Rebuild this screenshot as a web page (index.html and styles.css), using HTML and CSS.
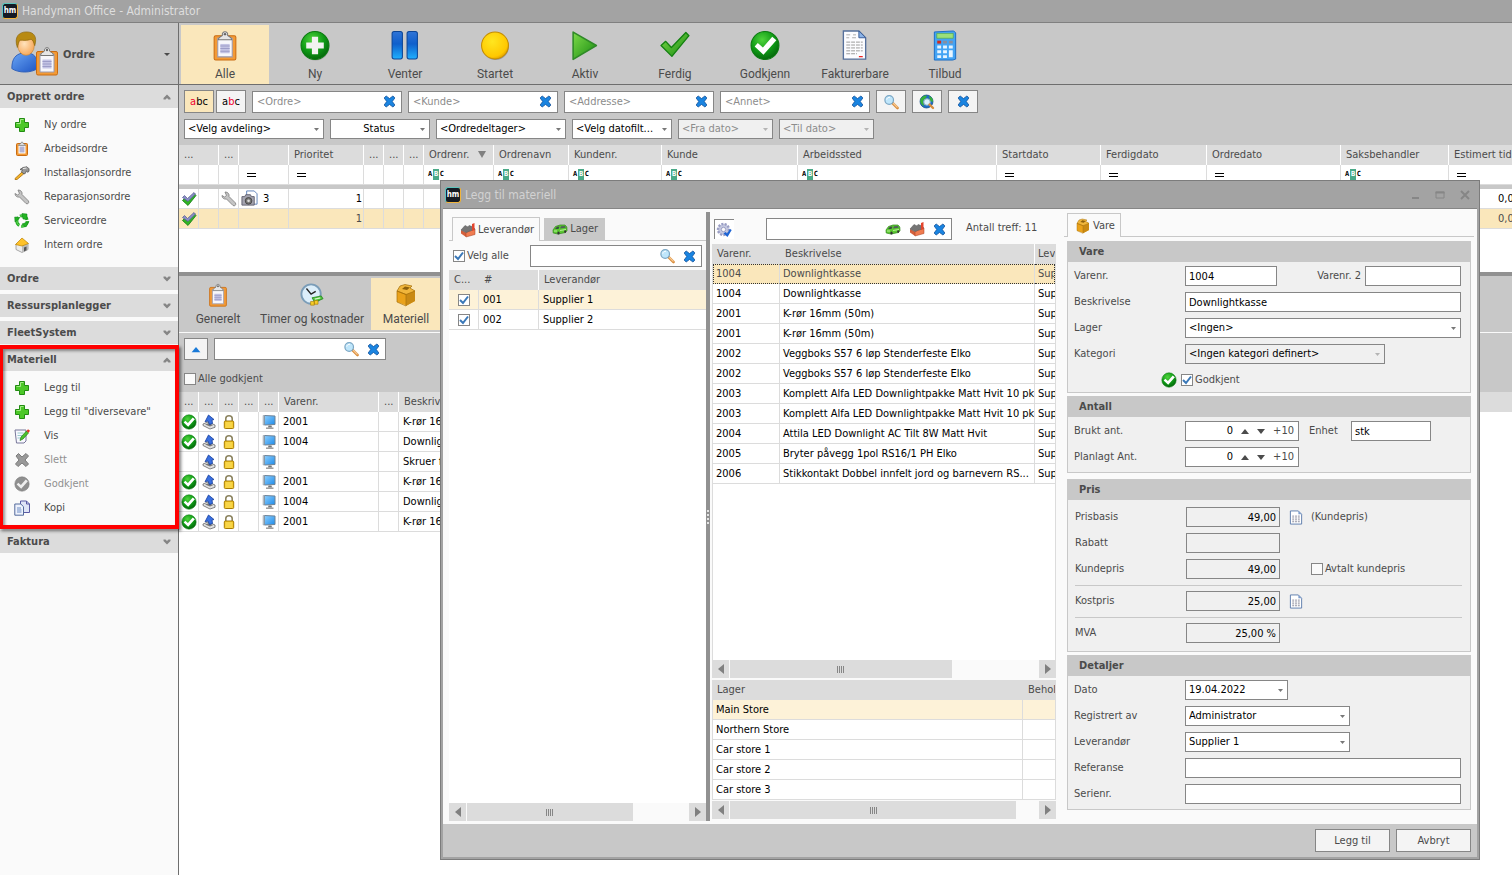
FILE: index.html
```html
<!DOCTYPE html>
<html lang="no">
<head>
    <meta charset="utf-8">
    <meta name="viewport" content="width=device-width, initial-scale=1.0">
    <title>Handyman Office - Administrator</title>
    <link rel="stylesheet" href="styles.css">
</head>
<body>
    <!-- Icon sprite -->
    <svg class="sprite" width="0" height="0" aria-hidden="true">
        <defs>
            <linearGradient id="g-green" x1="0" y1="0" x2="1" y2="1"><stop offset="0" stop-color="#7edb4a"/><stop offset="1" stop-color="#178a10"/></linearGradient>
            <radialGradient id="g-ball" cx=".4" cy=".3" r=".7"><stop offset="0" stop-color="#4fd43c"/><stop offset=".6" stop-color="#0f9a16"/><stop offset="1" stop-color="#056a0c"/></radialGradient>
            <linearGradient id="g-blue" x1="0" y1="0" x2="0" y2="1"><stop offset="0" stop-color="#2f74d6"/><stop offset=".45" stop-color="#0f5fcc"/><stop offset="1" stop-color="#1fb0ff"/></linearGradient>
            <radialGradient id="g-yellow" cx=".4" cy=".35" r=".7"><stop offset="0" stop-color="#ffe620"/><stop offset=".8" stop-color="#ffc800"/><stop offset="1" stop-color="#dc9a00"/></radialGradient>
            <radialGradient id="g-skin" cx=".4" cy=".4" r=".7"><stop offset="0" stop-color="#ffe3bd"/><stop offset="1" stop-color="#f5a250"/></radialGradient>
            <linearGradient id="g-shirt" x1="0" y1="0" x2="1" y2="1"><stop offset="0" stop-color="#6aa6f5"/><stop offset="1" stop-color="#1e55c4"/></linearGradient>
            <linearGradient id="g-screen" x1="0" y1="0" x2="1" y2="1"><stop offset="0" stop-color="#8fd0ff"/><stop offset="1" stop-color="#1c8ae8"/></linearGradient>
        </defs>
        <symbol id="i-clipboard" viewBox="0 0 24 30">
            <rect x="1.500" y="5.500" width="21" height="23.500" rx="1.500" fill="#f39a35" stroke="#c96c12"/>
            <path d="M5 8h14v18H5z" fill="#f7f7fb" stroke="#9a9ab0"/>
            <path d="M7.500 13.500h9v9h-9z" fill="#c3c3e4"/>
            <path d="M7.500 15.500h9M7.500 18h9M7.500 20.500h9" stroke="#9d9dc8"/>
            <path d="M5.500 9.500c0-3 3-3 4-4.500a2.600 2.600 0 1 1 5 0c1 1.500 4 1.500 4 4.500z" fill="#e6e6e6" stroke="#777"/>
            <circle cx="12" cy="4" r="1.200" fill="#666"/>
        </symbol>
        <symbol id="i-clip16" viewBox="0 0 16 16">
            <rect x="2.500" y="2.500" width="11" height="12" rx="1" fill="#f39a35" stroke="#c96c12"/>
            <path d="M4.500 3.500h7v9h-7z" fill="#fff"/>
            <path d="M5.500 5.500h5v6h-5z" fill="#b4b4d4"/>
            <path d="M4.500 4.500c0-1.500 2-1 2.500-2.500s1.500-1.500 2 0 2.500 1 2.500 2.500z" fill="#ddd" stroke="#777" stroke-width=".7"/>
        </symbol>
        <symbol id="i-person" viewBox="0 0 48 48">
            <path d="M2 41c0-11 4-15 11-17h8c7 2 9 6 9 17-7 5-21 5-28 0z" fill="url(#g-shirt)" stroke="#2a5cb8"/>
            <ellipse cx="17.500" cy="16" rx="9" ry="10.500" fill="url(#g-skin)" stroke="#c8842e" stroke-width=".7"/>
            <path d="M8 18C4 6 10 1 18 1s12 5 9 15c-1-4-2-6-4-7-5 2-9 1-12 1-2 2-2 5-3 8z" fill="#b88a12" stroke="#8a6208" stroke-width=".7"/>
        </symbol>
        <symbol id="i-addball" viewBox="0 0 30 30">
            <circle cx="15.500" cy="16" r="13.500" fill="#999" opacity=".7"/>
            <circle cx="15" cy="15" r="13.500" fill="url(#g-ball)" stroke="#0b7a10"/>
            <path d="M12 6.500h6V12h5.500v6H18v5.500h-6V18H6.500v-6H12z" fill="#f2f2f2"/>
        </symbol>
        <symbol id="i-pause" viewBox="0 0 30 30">
            <rect x="2.500" y="1.500" width="10" height="26.500" rx="2" fill="url(#g-blue)" stroke="#0c4596"/>
            <rect x="17" y="1.500" width="10" height="26.500" rx="2" fill="url(#g-blue)" stroke="#0c4596"/>
        </symbol>
        <symbol id="i-yellow" viewBox="0 0 30 30"><circle cx="15.500" cy="16" r="13" fill="#777" opacity=".6"/><circle cx="15" cy="15" r="13" fill="url(#g-yellow)" stroke="#c48c00"/></symbol>
        <symbol id="i-play" viewBox="0 0 30 30"><path d="M3.500 2L26 15 3.500 28.500z" fill="url(#g-green)" stroke="#2f8a28" stroke-width="1.500" stroke-linejoin="round"/></symbol>
        <symbol id="i-tick" viewBox="0 0 30 30"><path d="M1.500 15l4.500-4 5.500 6L25.500 2.500l3 3L12 25.500z" fill="url(#g-green)" stroke="#138010" stroke-width="1.300" stroke-linejoin="round"/></symbol>
        <symbol id="i-okball" viewBox="0 0 30 30">
            <circle cx="15" cy="15" r="13.500" fill="url(#g-ball)" stroke="#0b7a10"/>
            <path d="M5 16l3-3.500 5 4.500 9-10.500 4 3.500-12.500 14z" fill="#fff"/>
        </symbol>
        <symbol id="i-okgray" viewBox="0 0 30 30"><circle cx="15" cy="15" r="13.500" fill="#8f8f8f" stroke="#777"/><path d="M5 16l3-3.500 5 4.500 9-10.500 4 3.500-12.500 14z" fill="#eee"/></symbol>
        <symbol id="i-invoice" viewBox="0 0 26 32">
            <path d="M1 1h16l7 7v22H1z" fill="#fcfcff" stroke="#56709c" stroke-width="1.400"/>
            <path d="M17 1l7 7h-7z" fill="#8cb4e8" stroke="#3c5e98"/>
            <path d="M4 5h4M11 5h3M4 8h3M10 8h4" stroke="#aaa"/>
            <path d="M4 12.500h17M4 15.500h17M4 18.500h17M4 21.500h17M4 24.500h11" stroke="#999" stroke-dasharray="4 1"/>
            <path d="M17 27.500h4" stroke="#e22" stroke-width="1.300"/>
        </symbol>
        <symbol id="i-calc" viewBox="0 0 26 32">
            <path d="M2 2l20-1 2 2v27l-3 1H2z" fill="#44a4f4" stroke="#1c6cc4"/>
            <path d="M4.500 3.500h17v5h-17z" fill="#9be07a" stroke="#54a844" stroke-width=".7"/>
            <path d="M5 11h4v3H5z" fill="#d42a1a"/>
            <path d="M11 11h4v3h-4zM17 11h4v3h-4z" fill="#888ea0"/>
            <path d="M5 16h4v3H5zM11 16h4v3h-4zM17 16h4v3h-4zM5 21h4v3H5zM11 21h4v3h-4zM17 21h4v7h-4zM5 26h4v3H5zM11 26h4v3h-4z" fill="#e8f5ff"/>
        </symbol>
        <symbol id="i-plus" viewBox="0 0 16 16"><path d="M5.500 1.500h5v4h4v5h-4v4h-5v-4h-4v-5h4z" fill="#4cc828" stroke="#228c12"/><path d="M6.500 2.500h3M2.500 6.500h4v-4" stroke="#a4ec88" fill="none"/></symbol>
        <symbol id="i-hammer" viewBox="0 0 16 16"><path d="M1 13.500l7-6.500 1.800 1.800L3 14.500H1z" fill="#f5b428" stroke="#a86c0c" stroke-width=".8"/><path d="M6 4.500L9 2.500l4-.7 2 2v2.500l-1.500 1-1-1.500-1.500 3-2-.3-1.500-1.800 1-1.500z" fill="#999" stroke="#555" stroke-width=".8"/><path d="M9 3.500l3.500-.5" stroke="#eee"/></symbol>
        <symbol id="i-wrench" viewBox="0 0 16 16"><path d="M4 1c3 0 4.500 2 4 4.500l6.500 6.500c1 2-1 3.500-2.500 2.500L5.500 8C3 8.500 1 7 1 4.500L3.500 6 5.500 4.500z" fill="#c4c4c4" stroke="#848484" stroke-width=".9"/></symbol>
        <symbol id="i-service" viewBox="0 0 16 16"><circle cx="8" cy="8" r="5.200" fill="none" stroke="#1fae22" stroke-width="3" stroke-dasharray="8.900 2"/><circle cx="8" cy="8" r="5.200" fill="none" stroke="#7fe06c" stroke-width=".8" stroke-dasharray="8.900 2"/><path d="M8 .5L13 1v5.500L9 6zM15 8.500l-3 5.500-4-3zM1 9l-.3-5L6 4.500z" fill="#22b422" stroke="#0b7e14" stroke-width=".5"/></symbol>
        <symbol id="i-house" viewBox="0 0 16 16"><path d="M2 7l6-3 6 2.500v6L8 15.500l-6-3z" fill="#ececec" stroke="#888" stroke-width=".7"/><path d="M8 8v7.500l6-3v-6z" fill="#bdbdbd"/><path d="M1.500 7.500L8 1l6.500 5.500L8 9z" fill="#ffc22a" stroke="#bc8200" stroke-width=".7"/><path d="M10 10.500l2.500-1v3.800l-2.500 1.200z" fill="#555"/></symbol>
        <symbol id="i-note" viewBox="0 0 16 16"><path d="M1 2h11v11l-2 2H2.500z" fill="#f8f8ff" stroke="#777799"/><path d="M3.500 5h6M3.500 7.500h5M3.500 10h3" stroke="#9cc"/><path d="M6 12.500l1-3.500 5.500-6 2 2L9 11z" fill="#4cc22c" stroke="#217a12" stroke-width=".7"/><path d="M12.500 3L14 1.200l2 1.600-1.500 2z" fill="#e43224"/></symbol>
        <symbol id="i-xgray" viewBox="0 0 16 16"><path d="M2 4l2.500-2.500L8 5l4-3.500L14.500 4 11 8l3.500 4L12 14.500 8 11l-4 3.500L1.500 12 5 8z" fill="#999" stroke="#7c7c7c"/></symbol>
        <symbol id="i-x" viewBox="0 0 14 14"><path d="M1.200 3.200L3.400 1 7 3.800 10.800 1l2 2.200L10 7l2.800 3.800-2 2.200L7 10.200 3.400 13l-2.200-2.200L4 7z" fill="#1a84e0" stroke="#0c4c96" stroke-width=".8"/></symbol>
        <symbol id="i-copy" viewBox="0 0 16 16"><path d="M6.500 1h6l3 3v8.500h-9z" fill="#dfe4f6" stroke="#5a5aa4"/><path d="M12.500 1v3h3" fill="none" stroke="#5a5aa4"/><path d="M.8 4h6l2.700 2.700v8.500H.8z" fill="#eef2fc" stroke="#536a9c"/><path d="M3 8h4M3 10h4.500M3 12h4.500" stroke="#6c8cc4"/></symbol>
        <symbol id="i-search" viewBox="0 0 16 16"><path d="M9.500 9l5 5" stroke="#d88c3c" stroke-width="2.600" stroke-linecap="round"/><path d="M10 9l4.500 4.500" stroke="#f7c890" stroke-width="1.200"/><circle cx="6.200" cy="6" r="4.300" fill="#bfe6fb" stroke="#7aa6c4" stroke-width="1.200"/><path d="M3.700 5.700C4 4 5.500 3.200 7 3.200" stroke="#fff" fill="none"/></symbol>
        <symbol id="i-globe" viewBox="0 0 16 16"><circle cx="7.500" cy="7.500" r="6.500" fill="#1c6cc8" stroke="#0c4480" stroke-width=".7"/><path d="M2 4c3-3 5-3 6-2L6 5 4 7l1 5C2 11 0 7 2 4zM10 2c3 1 4 3 4 6l-3-1z" fill="#36b03c"/><circle cx="8" cy="8" r="3.300" fill="#d8f0fc" stroke="#8ab"/><path d="M10.500 10.500l3.500 3.500" stroke="#d88c3c" stroke-width="2.400" stroke-linecap="round"/></symbol>
        <symbol id="i-checks" viewBox="0 0 16 16"><path d="M1.500 9.500l2-2 3 2.500 6.500-7.500 2 2L7 14.500z" fill="#30b424" stroke="#127a10" stroke-width=".8"/><path d="M1.500 6.500l2-2 3 3L13 1.500 14.500 3 7 10.500z" fill="#8a90c8" stroke="#55598c" stroke-width=".7"/></symbol>
        <symbol id="i-camera" viewBox="0 0 18 18"><path d="M6 1h8l3 3v11H6z" fill="#fff" stroke="#5c80b8"/><path d="M1 7h3l1-2h5l1 2h3v9H1z" fill="#a4a4b0" stroke="#606070"/><circle cx="8" cy="11.500" r="3.500" fill="#777" stroke="#444"/><circle cx="8" cy="11.500" r="1.400" fill="#ddd"/></symbol>
        <symbol id="i-clock" viewBox="0 0 26 26"><circle cx="12" cy="12" r="10.500" fill="#dceefa" stroke="#7b9db8" stroke-width="2"/><path d="M7 6l5 6 5-3" fill="none" stroke="#222" stroke-width="1.500"/><path d="M13 16l10-2 2 3-9 4z" fill="#4cc23a" stroke="#1e8216" stroke-width=".8"/><path d="M16 17.500l6-1.500" stroke="#d8f8c8" stroke-width="1.400"/><path d="M11.500 20h4v4h-4zM15.500 19h4v4h-4z" fill="#f8ce28" stroke="#a87c08" stroke-width=".7"/></symbol>
        <symbol id="i-box" viewBox="0 0 24 24"><path d="M3 8l10-3 8 3v10l-8.500 4.500L3 19z" fill="#eaa21a"/><path d="M12 11l9-3v10l-9 5z" fill="#c98a14"/><path d="M3 8l3-5 5-1.500 7 1.500-2 2 5 3-9 3.500z" fill="#f0b63c" stroke="#a06c08" stroke-width=".7"/><path d="M8 6l3-2.500 5 1L13 7z" fill="#8c600c"/><path d="M3 8l9 3.500V23l-9-4z" fill="none" stroke="#a87008" stroke-width=".7"/></symbol>
        <symbol id="i-up" viewBox="0 0 12 8"><path d="M1 7l5-6 5 6z" fill="#1a7ad8"/></symbol>
        <symbol id="i-tray" viewBox="0 0 16 16"><path d="M2 10l5-2 7 3v2.300L9 15l-7-3.500z" fill="#e2e2e2" stroke="#666" stroke-width=".8"/><path d="M4 10.500l4-1.500 4 2.200L9 12.500z" fill="#777"/><path d="M7.500 1L13 5.500l-2 .5.500 3.500-3 1L7 7l-3 .8z" fill="#3a70e0" stroke="#173e9c" stroke-width=".8"/></symbol>
        <symbol id="i-lock" viewBox="0 0 16 16"><path d="M4.800 8V4.500C4.800 .8 11.200 .8 11.200 4.500V8" fill="none" stroke="#8c8460" stroke-width="1.600"/><rect x="3.300" y="7" width="9.400" height="7.500" rx="1" fill="#f6c81e" stroke="#a87c04"/><path d="M4.500 9h7M4.500 11h7M4.500 13h7" stroke="#fce888" stroke-width=".8"/></symbol>
        <symbol id="i-monitor" viewBox="0 0 16 16"><path d="M3.500 1.500l10.500.5v8.500L3.500 11z" fill="url(#g-screen)" stroke="#6d8296"/><path d="M2 1.500h1.400V11H2z" fill="#c4ccd4" stroke="#7c8894" stroke-width=".4"/><path d="M7.500 11.500h3l.5 2h-4z" fill="#777"/><path d="M5 14.200h7.500" stroke="#999" stroke-width="1.500"/></symbol>
        <symbol id="i-factory" viewBox="0 0 16 16"><path d="M1 8l5 2.500V15l-5-3.500z" fill="#d4603c"/><path d="M6 10.500L15 7v5.500L6 15z" fill="#f07c50" stroke="#a43c20" stroke-width=".5"/><path d="M1 8l4-4.500 3 1.500 1-1.500 3 1L15 7l-9 3.500z" fill="#757575" stroke="#555" stroke-width=".5"/><path d="M12 2l2.500-1v7L12 9z" fill="#e4442c"/></symbol>
        <symbol id="i-car" viewBox="0 0 16 16"><path d="M1 9l2.500-3.500L8 4h5l1.800 2 .2 3.500-1.500 2L6 13l-4.800-1z" fill="#5cc832" stroke="#2f861a" stroke-width=".7"/><path d="M3 8l2-2.300 2.500-.3L6.500 8z" fill="#3c4c44"/><path d="M8 7.600l1-2.300 4-.4.8 1.800z" fill="#50605a"/><path d="M2 10h3M8 9.500l6-1" stroke="#b6f294"/><ellipse cx="6.500" cy="12" rx="1.200" ry="1.500" fill="#333"/><ellipse cx="13.200" cy="10.600" rx="1" ry="1.300" fill="#333"/></symbol>
        <symbol id="i-gear" viewBox="0 0 16 16"><circle cx="7.500" cy="7.500" r="5.500" fill="#c4c8e0" stroke="#9a9ec4" stroke-width="2.400" stroke-dasharray="2 1.300"/><circle cx="7.500" cy="7.500" r="2.200" fill="#fafafa" stroke="#9a9ec4"/><path d="M7.500 11.500l2-1.500 1.500 1.500 3-4.500 1.700 1-4.200 7z" fill="#1c64d4"/></symbol>
        <symbol id="i-list" viewBox="0 0 14 16"><path d="M1 1h8.500L13 4.500V15H1z" fill="#fff" stroke="#5c7cac"/><path d="M9.500 1v3.500H13z" fill="#7c9ccc"/><path d="M3 6.500h8M3 8.500h8M3 10.500h8M3 12.500h8" stroke="#889" stroke-dasharray="2 1"/></symbol>
        <symbol id="i-down" viewBox="0 0 10 8"><path d="M1.500 1.500h2L5 3l1.500-1.500h2v1.500L5 6.500 1.500 3z" fill="#858585"/></symbol>
        <symbol id="i-left" viewBox="0 0 6 10"><path d="M6 0v10L0 5z" fill="#808080"/></symbol>
        <symbol id="i-right" viewBox="0 0 6 10"><path d="M0 0v10l6-5z" fill="#808080"/></symbol>
    </svg>

    <header class="titlebar"><span class="logo">hm</span><span>Handyman Office - Administrator</span></header>

    <div class="app">
        <!-- Left menu -->
        <nav class="sidebar">
            <button class="module">
                <span class="module-icon"><svg class="person"><use href="#i-person"/></svg><svg class="module-clip"><use href="#i-clipboard"/></svg></span>
                <span class="module-name">Ordre</span>
                <span class="caret"></span>
            </button>
            <div class="groups">
                <section class="nav-group">
                    <button class="nav-head">Opprett ordre<svg class="chev flip"><use href="#i-down"/></svg></button>
                    <div class="nav-list">
                        <a href="#"><svg class="ic"><use href="#i-plus"/></svg>Ny ordre</a>
                        <a href="#"><svg class="ic"><use href="#i-clip16"/></svg>Arbeidsordre</a>
                        <a href="#"><svg class="ic"><use href="#i-hammer"/></svg>Installasjonsordre</a>
                        <a href="#"><svg class="ic"><use href="#i-wrench"/></svg>Reparasjonsordre</a>
                        <a href="#"><svg class="ic"><use href="#i-service"/></svg>Serviceordre</a>
                        <a href="#"><svg class="ic"><use href="#i-house"/></svg>Intern ordre</a>
                    </div>
                </section>
                <section class="nav-group"><button class="nav-head">Ordre<svg class="chev"><use href="#i-down"/></svg></button></section>
                <section class="nav-group"><button class="nav-head">Ressursplanlegger<svg class="chev"><use href="#i-down"/></svg></button></section>
                <section class="nav-group"><button class="nav-head">FleetSystem<svg class="chev"><use href="#i-down"/></svg></button></section>
                <section class="nav-group marked">
                    <button class="nav-head">Materiell<svg class="chev flip"><use href="#i-down"/></svg></button>
                    <div class="nav-list">
                        <a href="#"><svg class="ic"><use href="#i-plus"/></svg>Legg til</a>
                        <a href="#"><svg class="ic"><use href="#i-plus"/></svg>Legg til "diversevare"</a>
                        <a href="#"><svg class="ic"><use href="#i-note"/></svg>Vis</a>
                        <a href="#" class="off"><svg class="ic"><use href="#i-xgray"/></svg>Slett</a>
                        <a href="#" class="off"><svg class="ic"><use href="#i-okgray"/></svg>Godkjent</a>
                        <a href="#"><svg class="ic"><use href="#i-copy"/></svg>Kopi</a>
                    </div>
                </section>
                <section class="nav-group"><button class="nav-head">Faktura<svg class="chev"><use href="#i-down"/></svg></button></section>
            </div>
        </nav>

        <main class="main">
            <div class="toolbar">
                <button class="tool active"><svg><use href="#i-clipboard"/></svg>Alle</button>
                <button class="tool"><svg><use href="#i-addball"/></svg>Ny</button>
                <button class="tool"><svg><use href="#i-pause"/></svg>Venter</button>
                <button class="tool"><svg><use href="#i-yellow"/></svg>Startet</button>
                <button class="tool"><svg><use href="#i-play"/></svg>Aktiv</button>
                <button class="tool"><svg><use href="#i-tick"/></svg>Ferdig</button>
                <button class="tool"><svg><use href="#i-okball"/></svg>Godkjenn</button>
                <button class="tool"><svg><use href="#i-invoice"/></svg>Fakturerbare</button>
                <button class="tool"><svg><use href="#i-calc"/></svg>Tilbud</button>
            </div>

            <div class="filters">
                <div class="filter-row">
                    <span class="abc-pair">
                        <button class="btn abc on"><b>a</b>bc</button>
                        <button class="btn abc">a<b>b</b>c</button>
                    </span>
                    <div class="search"><input type="text" aria-label="Ordre" placeholder="&lt;Ordre&gt;"><button aria-label="Fjern"><svg class="ix"><use href="#i-x"/></svg></button></div>
                    <div class="search"><input type="text" aria-label="Kunde" placeholder="&lt;Kunde&gt;"><button aria-label="Fjern"><svg class="ix"><use href="#i-x"/></svg></button></div>
                    <div class="search"><input type="text" aria-label="Addresse" placeholder="&lt;Addresse&gt;"><button aria-label="Fjern"><svg class="ix"><use href="#i-x"/></svg></button></div>
                    <div class="search"><input type="text" aria-label="Annet" placeholder="&lt;Annet&gt;"><button aria-label="Fjern"><svg class="ix"><use href="#i-x"/></svg></button></div>
                    <button class="btn sq" aria-label="Søk"><svg class="ic"><use href="#i-search"/></svg></button>
                    <button class="btn sq" aria-label="Søk på nett"><svg class="ic"><use href="#i-globe"/></svg></button>
                    <button class="btn sq" aria-label="Nullstill"><svg class="ix"><use href="#i-x"/></svg></button>
                </div>
                <div class="filter-row">
                    <select class="w140" aria-label="Avdeling"><option>&lt;Velg avdeling&gt;</option></select>
                    <select class="w100 mid" aria-label="Status"><option>Status</option></select>
                    <select class="w130" aria-label="Ordredeltager"><option>&lt;Ordredeltager&gt;</option></select>
                    <select class="w100" aria-label="Datofilter"><option>&lt;Velg datofilt...</option></select>
                    <select class="w95" aria-label="Fra dato" disabled><option>&lt;Fra dato&gt;</option></select>
                    <select class="w95" aria-label="Til dato" disabled><option>&lt;Til dato&gt;</option></select>
                </div>
            </div>

            <div class="orders">
                <table class="grid orders-grid">
                    <colgroup><col class="c20"><col class="c20"><col class="c20"><col class="c50"><col class="c75"><col class="c20"><col class="c20"><col class="c20"><col class="c70"><col class="c75"><col class="c93"><col class="c136"><col class="c199"><col class="c104"><col class="c106"><col class="c134"><col class="c108"><col></colgroup>
                    <thead>
                        <tr><th colspan="2">...</th><th>...</th><th></th><th>Prioritet</th><th>...</th><th>...</th><th>...</th><th>Ordrenr.<span class="sort"></span></th><th>Ordrenavn</th><th>Kundenr.</th><th>Kunde</th><th>Arbeidssted</th><th>Startdato</th><th>Ferdigdato</th><th>Ordredato</th><th>Saksbehandler</th><th>Estimert tid</th></tr>
                        <tr class="filter"><td></td><td></td><td></td><td><i class="eq"></i></td><td><i class="eq"></i></td><td></td><td></td><td></td><td><span class="abcf">A<b>B</b>C</span></td><td><span class="abcf">A<b>B</b>C</span></td><td><span class="abcf">A<b>B</b>C</span></td><td><span class="abcf">A<b>B</b>C</span></td><td><span class="abcf">A<b>B</b>C</span></td><td><i class="eq"></i></td><td><i class="eq"></i></td><td><i class="eq"></i></td><td><span class="abcf">A<b>B</b>C</span></td><td><i class="eq"></i></td></tr>
                    </thead>
                    <tbody>
                        <tr class="gap"><td colspan="18"></td></tr>
                        <tr><td class="icell"><svg class="ic"><use href="#i-checks"/></svg></td><td></td><td class="icell"><svg class="ic"><use href="#i-wrench"/></svg></td><td class="photo"><svg class="cam"><use href="#i-camera"/></svg>3</td><td class="num">1</td><td></td><td></td><td></td><td></td><td></td><td></td><td></td><td></td><td></td><td></td><td></td><td></td><td class="num">0,00</td></tr>
                        <tr class="picked"><td class="icell"><svg class="ic"><use href="#i-checks"/></svg></td><td></td><td></td><td></td><td class="num">1</td><td></td><td></td><td></td><td></td><td></td><td></td><td></td><td></td><td></td><td></td><td></td><td></td><td class="num">0,00</td></tr>
                    </tbody>
                </table>
            </div>

            <!-- Order details -->
            <div class="details">
                <div class="detail-tabs">
                    <button class="dtab"><svg><use href="#i-clipboard"/></svg>Generelt</button>
                    <button class="dtab"><svg><use href="#i-clock"/></svg>Timer og kostnader</button>
                    <button class="dtab active"><svg><use href="#i-box"/></svg>Materiell</button>
                </div>
                <div class="detail-filters">
                    <div class="filter-row">
                        <button class="btn updown" aria-label="Opp"><svg class="upi"><use href="#i-up"/></svg></button>
                        <div class="search wide"><input type="text" aria-label="Søk materiell"><button aria-label="Søk"><svg class="ic"><use href="#i-search"/></svg></button><button aria-label="Fjern"><svg class="ix"><use href="#i-x"/></svg></button></div>
                    </div>
                    <label class="check"><input type="checkbox">Alle godkjent</label>
                </div>
                <table class="grid material-grid">
                    <colgroup><col class="c20"><col class="c20"><col class="c20"><col class="c20"><col class="c20"><col class="c100"><col class="c20"><col class="c250"><col></colgroup>
                    <thead><tr><th>...</th><th>...</th><th>...</th><th>...</th><th>...</th><th>Varenr.</th><th>...</th><th>Beskrivelse</th><th></th></tr></thead>
                    <tbody>
                        <tr><td class="icell"><svg class="ic"><use href="#i-okball"/></svg></td><td class="icell"><svg class="ic"><use href="#i-tray"/></svg></td><td class="icell"><svg class="ic"><use href="#i-lock"/></svg></td><td></td><td class="icell"><svg class="ic"><use href="#i-monitor"/></svg></td><td>2001</td><td></td><td>K-rør 16mm (50m)</td></tr>
                        <tr><td class="icell"><svg class="ic"><use href="#i-okball"/></svg></td><td class="icell"><svg class="ic"><use href="#i-tray"/></svg></td><td class="icell"><svg class="ic"><use href="#i-lock"/></svg></td><td></td><td class="icell"><svg class="ic"><use href="#i-monitor"/></svg></td><td>1004</td><td></td><td>Downlightkasse</td></tr>
                        <tr><td></td><td class="icell"><svg class="ic"><use href="#i-tray"/></svg></td><td class="icell"><svg class="ic"><use href="#i-lock"/></svg></td><td></td><td class="icell"><svg class="ic"><use href="#i-monitor"/></svg></td><td></td><td></td><td>Skruer f</td></tr>
                        <tr><td class="icell"><svg class="ic"><use href="#i-okball"/></svg></td><td class="icell"><svg class="ic"><use href="#i-tray"/></svg></td><td class="icell"><svg class="ic"><use href="#i-lock"/></svg></td><td></td><td class="icell"><svg class="ic"><use href="#i-monitor"/></svg></td><td>2001</td><td></td><td>K-rør 16mm (50m)</td></tr>
                        <tr><td class="icell"><svg class="ic"><use href="#i-okball"/></svg></td><td class="icell"><svg class="ic"><use href="#i-tray"/></svg></td><td class="icell"><svg class="ic"><use href="#i-lock"/></svg></td><td></td><td class="icell"><svg class="ic"><use href="#i-monitor"/></svg></td><td>1004</td><td></td><td>Downlightkasse</td></tr>
                        <tr><td class="icell"><svg class="ic"><use href="#i-okball"/></svg></td><td class="icell"><svg class="ic"><use href="#i-tray"/></svg></td><td class="icell"><svg class="ic"><use href="#i-lock"/></svg></td><td></td><td class="icell"><svg class="ic"><use href="#i-monitor"/></svg></td><td>2001</td><td></td><td>K-rør 16mm (50m)</td></tr>
                    </tbody>
                </table>
            </div>
        </main>
    </div>

    <!-- Add material window -->
    <div class="dialog" role="dialog" aria-labelledby="dlg-title">
        <div class="dialog-title">
            <span class="logo">hm</span><span id="dlg-title">Legg til materiell</span>
            <span class="win-buttons">
                <button aria-label="Minimer"><svg width="10" height="10"><path d="M2 8h7" stroke="#868686" stroke-width="2"/></svg></button>
                <button aria-label="Maksimer"><svg width="10" height="10"><path d="M1 2h8v6H1z" fill="none" stroke="#868686"/><path d="M.5 2.500h9" stroke="#868686" stroke-width="2"/></svg></button>
                <button aria-label="Lukk"><svg width="10" height="10"><path d="M1 1l8 8M9 1L1 9" stroke="#868686" stroke-width="2"/></svg></button>
            </span>
        </div>
        <div class="dialog-body">
            <div class="suppliers">
                <div class="tabs">
                    <button class="tab on"><svg class="ic"><use href="#i-factory"/></svg>Leverandør</button>
                    <button class="tab"><svg class="ic"><use href="#i-car"/></svg>Lager</button>
                </div>
                <div class="supplier-search">
                    <label class="check"><input type="checkbox" checked>Velg alle</label>
                    <div class="search wide"><input type="text" aria-label="Søk leverandør"><button aria-label="Søk"><svg class="ic"><use href="#i-search"/></svg></button><button aria-label="Fjern"><svg class="ix"><use href="#i-x"/></svg></button></div>
                </div>
                <div class="grid-box">
                    <table class="grid">
                        <colgroup><col class="c30"><col class="c60"><col></colgroup>
                        <thead><tr><th class="plain">C...</th><th>#</th><th>Leverandør</th></tr></thead>
                        <tbody>
                            <tr class="soft"><td class="icell"><input type="checkbox" aria-label="Supplier 1" checked></td><td>001</td><td>Supplier 1</td></tr>
                            <tr><td class="icell"><input type="checkbox" aria-label="Supplier 2" checked></td><td>002</td><td>Supplier 2</td></tr>
                        </tbody>
                    </table>
                </div>
                <div class="scrollbar"><button aria-label="Venstre"><svg><use href="#i-left"/></svg></button><div class="track"><div class="thumb" style="width: 75%"><i></i></div></div><button aria-label="Høyre"><svg><use href="#i-right"/></svg></button></div>
            </div>

            <div class="splitter"><i></i></div>

            <div class="items">
                <div class="items-search">
                    <button class="gear" aria-label="Innstillinger"><svg class="ic"><use href="#i-gear"/></svg></button>
                    <div class="search"><input type="text" aria-label="Søk vare"><button aria-label="Lager"><svg class="ic"><use href="#i-car"/></svg></button><button aria-label="Leverandør"><svg class="ic"><use href="#i-factory"/></svg></button><button aria-label="Fjern"><svg class="ix"><use href="#i-x"/></svg></button></div>
                    <span>Antall treff: 11</span>
                </div>
                <div class="grid-box framed">
                    <table class="grid items-grid">
                        <colgroup><col class="c67"><col class="c255"><col></colgroup>
                        <thead><tr><th class="plain">Varenr.</th><th>Beskrivelse</th><th>Leverandør</th></tr></thead>
                        <tbody>
                            <tr class="picked focus"><td>1004</td><td>Downlightkasse</td><td>Supplier 1</td></tr>
                            <tr><td>1004</td><td>Downlightkasse</td><td>Supplier 2</td></tr>
                            <tr><td>2001</td><td>K-rør 16mm (50m)</td><td>Supplier 1</td></tr>
                            <tr><td>2001</td><td>K-rør 16mm (50m)</td><td>Supplier 2</td></tr>
                            <tr><td>2002</td><td>Veggboks S57 6 løp Stenderfeste Elko</td><td>Supplier 1</td></tr>
                            <tr><td>2002</td><td>Veggboks S57 6 løp Stenderfeste Elko</td><td>Supplier 2</td></tr>
                            <tr><td>2003</td><td>Komplett Alfa LED Downlightpakke Matt Hvit 10 pk</td><td>Supplier 1</td></tr>
                            <tr><td>2003</td><td>Komplett Alfa LED Downlightpakke Matt Hvit 10 pk</td><td>Supplier 2</td></tr>
                            <tr><td>2004</td><td>Attila LED Downlight AC Tilt 8W Matt Hvit</td><td>Supplier 1</td></tr>
                            <tr><td>2005</td><td>Bryter påvegg 1pol RS16/1 PH Elko</td><td>Supplier 1</td></tr>
                            <tr><td>2006</td><td>Stikkontakt Dobbel innfelt jord og barnevern RS...</td><td>Supplier 1</td></tr>
                        </tbody>
                    </table>
                </div>
                <div class="scrollbar"><button aria-label="Venstre"><svg><use href="#i-left"/></svg></button><div class="track"><div class="thumb" style="width: 72%"><i></i></div></div><button aria-label="Høyre"><svg><use href="#i-right"/></svg></button></div>
                <table class="grid stock-grid">
                    <colgroup><col class="c310"><col></colgroup>
                    <thead><tr><th class="plain">Lager</th><th>Beholdning</th></tr></thead>
                    <tbody>
                        <tr class="soft"><td>Main Store</td><td></td></tr>
                        <tr><td>Northern Store</td><td></td></tr>
                        <tr><td>Car store 1</td><td></td></tr>
                        <tr><td>Car store 2</td><td></td></tr>
                        <tr><td>Car store 3</td><td></td></tr>
                    </tbody>
                </table>
                <div class="scrollbar"><button aria-label="Venstre"><svg><use href="#i-left"/></svg></button><div class="track"><div class="thumb" style="width: 93%"><i></i></div></div><button aria-label="Høyre"><svg><use href="#i-right"/></svg></button></div>
            </div>

            <div class="product">
                <div class="tabs"><button class="tab on"><svg class="ic"><use href="#i-box"/></svg>Vare</button></div>
                <div class="boxes">
                    <fieldset class="box item">
                        <legend>Vare</legend>
                        <div class="field"><label for="varenr">Varenr.</label><input id="varenr" class="w92" type="text" value="1004"><label class="second" for="varenr2">Varenr. 2</label><input id="varenr2" class="w96" type="text"></div>
                        <div class="field"><label for="beskrivelse">Beskrivelse</label><input id="beskrivelse" class="full" type="text" value="Downlightkasse"></div>
                        <div class="field"><label for="lager">Lager</label><select id="lager" class="full"><option>&lt;Ingen&gt;</option></select></div>
                        <div class="field"><label for="kategori">Kategori</label><select id="kategori" class="w200 locked" disabled><option>&lt;Ingen kategori definert&gt;</option></select></div>
                        <div class="field approved"><svg class="ic"><use href="#i-okball"/></svg><label class="check"><input type="checkbox" checked>Godkjent</label></div>
                    </fieldset>
                    <fieldset class="box">
                        <legend>Antall</legend>
                        <div class="field"><label for="brukt">Brukt ant.</label><div class="spin"><input id="brukt" type="text" value="0"><button aria-label="Opp"><i class="tri-up"></i></button><button aria-label="Ned"><i class="tri-down"></i></button><button>+10</button></div><label class="unit" for="enhet">Enhet</label><input id="enhet" class="w80" type="text" value="stk"></div>
                        <div class="field"><label for="planlagt">Planlagt Ant.</label><div class="spin"><input id="planlagt" type="text" value="0"><button aria-label="Opp"><i class="tri-up"></i></button><button aria-label="Ned"><i class="tri-down"></i></button><button>+10</button></div></div>
                    </fieldset>
                    <fieldset class="box price">
                        <legend>Pris</legend>
                        <div class="field"><label for="prisbasis">Prisbasis</label><input id="prisbasis" type="text" value="49,00" readonly><button aria-label="Prisliste"><svg class="li"><use href="#i-list"/></svg></button><span>(Kundepris)</span></div>
                        <div class="field"><label for="rabatt">Rabatt</label><input id="rabatt" type="text" readonly></div>
                        <div class="field"><label for="kundepris">Kundepris</label><input id="kundepris" type="text" value="49,00" readonly><label class="check agreed"><input type="checkbox">Avtalt kundepris</label></div>
                        <hr>
                        <div class="field"><label for="kostpris">Kostpris</label><input id="kostpris" type="text" value="25,00" readonly><button aria-label="Kostliste"><svg class="li"><use href="#i-list"/></svg></button></div>
                        <hr>
                        <div class="field"><label for="mva">MVA</label><input id="mva" type="text" value="25,00 %" readonly></div>
                    </fieldset>
                    <fieldset class="box">
                        <legend>Detaljer</legend>
                        <div class="field"><label for="dato">Dato</label><select id="dato" class="w103"><option>19.04.2022</option></select></div>
                        <div class="field"><label for="registrert">Registrert av</label><select id="registrert" class="w165"><option>Administrator</option></select></div>
                        <div class="field"><label for="leverandor">Leverandør</label><select id="leverandor" class="w165"><option>Supplier 1</option></select></div>
                        <div class="field"><label for="referanse">Referanse</label><input id="referanse" class="full" type="text"></div>
                        <div class="field"><label for="serienr">Serienr.</label><input id="serienr" class="full" type="text"></div>
                    </fieldset>
                </div>
            </div>
        </div>
        <div class="dialog-footer">
            <button class="btn">Legg til</button>
            <button class="btn">Avbryt</button>
        </div>
    </div>
</body>
</html>
```

FILE: styles.css
```css
* {
    box-sizing: border-box;
}

body {
    margin: 0;
    height: 100vh;
    display: flex;
    flex-direction: column;
    overflow: hidden;
    background: #fff;
    color: #4b4b4b;
    font-family: "DejaVu Sans Condensed", "DejaVu Sans", sans-serif;
    font-size: 11px;
    line-height: 14px;
}

button,
input,
select {
    margin: 0;
    padding: 0;
    border: 0;
    border-radius: 0;
    background: none;
    color: inherit;
    font: inherit;
}

a {
    color: inherit;
    text-decoration: none;
}

.sprite {
    position: absolute;
}

.ic {
    width: 16px;
    height: 16px;
    flex: none;
    display: block;
}

.ix {
    width: 13px;
    height: 13px;
    display: block;
}

/* Title bar */
.titlebar {
    flex: none;
    height: 23px;
    display: flex;
    align-items: center;
    gap: 4px;
    padding-left: 2px;
    background: #a3a3a3;
    border-bottom: 1px solid #808080;
    color: #dedede;
    font-size: 12px;
}

.logo {
    width: 16px;
    height: 16px;
    border: 1px solid;
    border-color: #5cc4bc #f0b43c #f0b43c #5cc4bc;
    border-radius: 3px;
    background: #141a24;
    color: #fff;
    font-size: 8px;
    font-weight: bold;
    line-height: 13px;
    text-align: center;
}

.app {
    flex: 1;
    display: flex;
    min-height: 0;
}

/* Sidebar */
.sidebar {
    width: 179px;
    flex: none;
    border-right: 1px solid #6e6e6e;
    background: #fafafa;
}

.module {
    width: 100%;
    height: 62px;
    display: flex;
    align-items: center;
    padding: 2px 8px 0 10px;
    background: #c8c8c8;
    border-bottom: 1px solid #6e6e6e;
    font-weight: bold;
    text-align: left;
}

.module-icon {
    position: relative;
    width: 53px;
    height: 48px;
}

.person {
    width: 44px;
    height: 44px;
}

.module-clip {
    position: absolute;
    left: 25px;
    top: 15px;
    width: 24px;
    height: 30px;
}

.module-name {
    flex: 1;
}

.caret {
    border: 3px solid transparent;
    border-top-color: #4b4b4b;
    border-bottom: 0;
}

.groups {
    display: flex;
    flex-direction: column;
    gap: 4px;
}

.nav-head {
    width: 100%;
    height: 23px;
    display: flex;
    align-items: center;
    justify-content: space-between;
    padding: 0 6px 0 7px;
    background: #dcdcdc;
    font-weight: bold;
}

.chev {
    width: 10px;
    height: 8px;
}

.flip {
    transform: rotate(180deg);
}

.nav-list {
    padding: 5px 0 6px;
}

.nav-list a {
    display: flex;
    align-items: center;
    gap: 14px;
    height: 24px;
    padding-left: 14px;
}

.nav-list .off {
    color: #909090;
}

/* Red frame round the material menu */
.marked {
    position: relative;
}

.marked::after {
    content: "";
    position: absolute;
    inset: -3px -1px -3px -1px;
    border: 4px solid #f00;
    box-shadow: 2px 2px 3px rgba(0, 0, 0, 0.5), inset 2px 2px 3px rgba(0, 0, 0, 0.4);
    pointer-events: none;
    z-index: 2;
}

/* Main area */
.main {
    flex: 1;
    min-width: 0;
    display: flex;
    flex-direction: column;
}

.toolbar {
    flex: none;
    height: 62px;
    display: flex;
    gap: 2px;
    padding: 2px 2px 0;
    background: #c8c8c8;
    border-bottom: 1px solid #6e6e6e;
}

.tool {
    width: 88px;
    display: flex;
    flex-direction: column;
    align-items: center;
    gap: 6px;
    padding-top: 5px;
    font-family: Roboto, sans-serif;
    font-size: 12px;
}

.tool svg {
    width: 32px;
    height: 31px;
}

.active {
    background: #fae7bb;
}

.filters {
    flex: none;
    display: flex;
    flex-direction: column;
    gap: 6px;
    padding: 5px 5px 6px;
    background: #c8c8c8;
}

.filter-row {
    display: flex;
    align-items: center;
    gap: 6px;
}

.abc-pair {
    display: flex;
    gap: 2px;
}

.btn {
    height: 23px;
    border: 1px solid #868686;
    background: #f4f4f4;
    display: flex;
    align-items: center;
    justify-content: center;
}

.abc {
    width: 30px;
    color: #000;
}

.abc b {
    color: #f00030;
    font-weight: normal;
}

.abc.on {
    background: #fae7bb;
}

.sq {
    width: 30px;
}

.search {
    width: 150px;
    height: 22px;
    display: flex;
    align-items: center;
    gap: 8px;
    padding: 0 5px 0 4px;
    border: 1px solid #868686;
    background: #fff;
}

.search input {
    flex: 1;
    min-width: 0;
    height: 100%;
    color: #000;
}

.search input::placeholder {
    color: #8c8c8c;
    opacity: 1;
}

.search.wide {
    width: 172px;
}

select {
    height: 20px;
    padding: 0 14px 0 3px;
    border: 1px solid #868686;
    appearance: none;
    background: #fff url("data:image/svg+xml,%3Csvg xmlns='http://www.w3.org/2000/svg' width='5' height='3'%3E%3Cpath d='M0 0h5L2.500 3z' fill='%23777'/%3E%3C/svg%3E") no-repeat right 4px center;
    color: #000;
    opacity: 1;
}

select:disabled {
    background-color: #f0f0f0;
    background-image: url("data:image/svg+xml,%3Csvg xmlns='http://www.w3.org/2000/svg' width='5' height='3'%3E%3Cpath d='M0 0h5L2.500 3z' fill='%23b4b4b4'/%3E%3C/svg%3E");
    color: #8c8c8c;
    opacity: 1;
}

select.locked:disabled {
    color: #000;
}

.mid {
    padding-left: 12px;
    text-align: center;
}

.w80 { width: 80px; }
.w92 { width: 92px; }
.w95 { width: 95px; }
.w96 { width: 96px; }
.w100 { width: 100px; }
.w103 { width: 103px; }
.w130 { width: 130px; }
.w140 { width: 140px; }
.w165 { width: 165px; }
.w200 { width: 200px; }

/* Grids */
.grid {
    width: 100%;
    table-layout: fixed;
    border-collapse: separate;
    border-spacing: 0;
    color: #000;
}

.grid th,
.grid td {
    height: 20px;
    padding: 0 4px;
    overflow: hidden;
    white-space: nowrap;
    text-align: left;
}

.grid th {
    padding-left: 5px;
    background: #dcdcdc;
    border-right: 1px solid #fff;
    color: #4b4b4b;
    font-weight: normal;
}

.grid td {
    background: #fff;
    border-right: 1px solid #dcdcdc;
    border-bottom: 1px solid #dcdcdc;
}

.grid th:last-child,
.grid td:last-child {
    border-right: 0;
}

.grid th.plain {
    border-right-color: #dcdcdc;
}

.grid .picked td {
    background: #fae7bb;
    color: #4b4b4b;
}

.grid .soft td {
    background: #fdf2d8;
}

.grid .icell {
    padding: 0 1px;
}

.icell .ic {
    margin: 0 auto;
}

.grid .num {
    padding-right: 1px;
    text-align: right;
}

.c20 { width: 20px; }
.c30 { width: 30px; }
.c50 { width: 50px; }
.c60 { width: 60px; }
.c67 { width: 67px; }
.c70 { width: 70px; }
.c75 { width: 75px; }
.c93 { width: 93px; }
.c100 { width: 100px; }
.c104 { width: 104px; }
.c106 { width: 106px; }
.c108 { width: 108px; }
.c134 { width: 134px; }
.c136 { width: 136px; }
.c199 { width: 199px; }
.c250 { width: 250px; }
.c255 { width: 255px; }
.c310 { width: 310px; }

.orders {
    flex: none;
    height: 127px;
    overflow: hidden;
}

.grid.orders-grid {
    width: 1342px;
}

.grid .gap td {
    height: 4px;
    background: #c8c8c8;
    border: 0;
}

.grid .filter td {
    vertical-align: middle;
}

.eq {
    display: block;
    width: 9px;
    height: 4px;
    margin-left: 4px;
    border: solid #000;
    border-width: 1px 0;
}

.abcf {
    display: flex;
    width: 16px;
    color: #000;
    font-family: "DejaVu Sans Mono", monospace;
    font-size: 7px;
    font-weight: bold;
    line-height: 11px;
    justify-content: space-between;
}

.abcf b {
    padding: 0 1px;
    background: #4aa987;
    color: #fff;
}

.sort {
    display: inline-block;
    margin-left: 9px;
    border: 4px solid transparent;
    border-top: 7px solid #808080;
    border-bottom: 0;
}

.photo .cam {
    width: 17px;
    height: 17px;
    margin: 0 5px 0 -2px;
    vertical-align: middle;
}

/* Details below the order list */
.details {
    flex: 1;
    border-top: 4px solid #919191;
}

.detail-tabs {
    height: 57px;
    display: flex;
    gap: 3px;
    padding: 2px 4px;
    background: #c8c8c8;
    border-bottom: 1px solid #fafafa;
}

.dtab {
    min-width: 70px;
    display: flex;
    flex-direction: column;
    align-items: center;
    gap: 5px;
    padding: 5px 4px 0;
    font-family: Roboto, sans-serif;
    font-size: 12px;
}

.dtab svg {
    width: 24px;
    height: 24px;
}

.detail-filters {
    height: 59px;
    padding: 5px;
    background: #c8c8c8;
}

.updown {
    width: 24px;
    height: 22px;
}

.upi {
    width: 12px;
    height: 7px;
}

.check {
    display: flex;
    align-items: center;
    gap: 2px;
}

.detail-filters .check {
    margin-top: 12px;
}

input[type="checkbox"] {
    appearance: none;
    flex: none;
    width: 12px;
    height: 12px;
    border: 1px solid #868686;
    background: #fafafa;
}

input[type="checkbox"]:checked {
    background: #fff url("data:image/svg+xml,%3Csvg xmlns='http://www.w3.org/2000/svg' width='10' height='10'%3E%3Cpath d='M1 5l3 3 5-6.500' fill='none' stroke='%233a78b8' stroke-width='2'/%3E%3C/svg%3E") no-repeat center;
}

.icell input {
    display: block;
    margin: 0 auto;
}

/* Dialog window */
.dialog {
    position: absolute;
    left: 440px;
    right: 32px;
    top: 180px;
    bottom: 15px;
    display: flex;
    flex-direction: column;
    padding: 0 2px 2px;
    border: 1px solid #7c7c7c;
    background: #a3a3a3;
}

.dialog-title {
    flex: none;
    height: 28px;
    display: flex;
    align-items: center;
    gap: 4px;
    padding: 0 7px 0 2px;
    border-bottom: 1px solid #868686;
    color: #d2d2d2;
    font-size: 12px;
}

.win-buttons {
    flex: 1;
    display: flex;
    justify-content: flex-end;
    gap: 15px;
}

.win-buttons svg {
    display: block;
}

.dialog-body {
    flex: 1;
    min-height: 0;
    display: flex;
    padding: 3px 3px 3px 6px;
    background: #fafafa;
}

.tabs {
    flex: none;
    display: flex;
    align-items: flex-end;
    gap: 4px;
    padding-left: 3px;
    border-bottom: 1px solid #c8c8c8;
}

.tab {
    height: 22px;
    display: flex;
    align-items: center;
    gap: 2px;
    padding: 0 7px 0 8px;
    background: #c8c8c8;
}

.tab.on {
    height: 24px;
    margin-bottom: -1px;
    border: 1px solid #c8c8c8;
    border-bottom: 0;
    background: #fafafa;
    padding: 0 5px 0 7px;
}

.suppliers {
    width: 257px;
    flex: none;
    display: flex;
    flex-direction: column;
    padding-top: 5px;
}

.supplier-search {
    display: flex;
    align-items: center;
    justify-content: space-between;
    padding: 4px 4px 3px;
}

.grid-box {
    flex: 1;
    min-height: 0;
    overflow: hidden;
    background: #fff;
}

.framed,
.stock-grid {
    border: 1px solid #dcdcdc;
    border-width: 0 1px;
}

.scrollbar {
    flex: none;
    height: 18px;
    display: flex;
    gap: 1px;
}

.scrollbar button {
    width: 17px;
    display: flex;
    align-items: center;
    justify-content: center;
    background: #dcdcdc;
}

.scrollbar svg {
    width: 6px;
    height: 10px;
}

.track {
    flex: 1;
}

.thumb {
    height: 100%;
    display: flex;
    align-items: center;
    justify-content: center;
    background: #dcdcdc;
}

.thumb i {
    width: 7px;
    height: 7px;
    background: repeating-linear-gradient(to right, #868686 0 1px, transparent 1px 2px);
}

.splitter {
    width: 4px;
    flex: none;
    display: flex;
    align-items: center;
    justify-content: center;
    background: #919191;
}

.splitter i {
    width: 2px;
    height: 14px;
    background: repeating-linear-gradient(#e4e4e4 0 2px, transparent 2px 4px);
}

.items {
    flex: 1;
    min-width: 0;
    display: flex;
    flex-direction: column;
    margin: 5px 8px 2px 2px;
}

.items-search {
    height: 27px;
    flex: none;
    display: flex;
    align-items: flex-start;
    padding-left: 2px;
    line-height: 22px;
    white-space: nowrap;
}

.items-search .search {
    width: 186px;
    margin: 1px 14px 0 32px;
}

.gear {
    width: 20px;
    height: 20px;
    margin-top: 2px;
    padding: 1px;
    border: 1px solid #868686;
    border-width: 1px 0 0 1px;
    background: #fff;
}

.items .plain {
    padding-left: 4px;
}

.grid.items-grid td {
    padding: 0 0 0 3px;
}

.grid.items-grid th:last-child {
    padding: 0 0 0 3px;
}

.grid .focus td {
    border-top: 1px dotted #333;
    border-bottom: 1px dotted #333;
}

.grid.items-grid .focus td:first-child {
    border-left: 1px dotted #333;
    padding-left: 2px;
}

.grid .focus td:last-child {
    border-right: 1px dotted #333;
}

.stock-grid {
    margin: 2px 0 1px;
}

.grid.stock-grid td {
    padding-left: 3px;
}

/* Product form */
.product {
    width: 410px;
    flex: none;
    padding-top: 1px;
}

.boxes {
    display: flex;
    flex-direction: column;
    gap: 3px;
    padding: 4px 3px 0;
}

.box {
    display: flex;
    flex-direction: column;
    gap: 6px;
    min-width: 0;
    margin: 0;
    padding: 0 9px 5px 6px;
    border: 1px solid #c8c8c8;
    border-top: 0;
    background: #f0f0f0;
}

.box.item {
    padding-bottom: 2px;
}

.box legend {
    float: left;
    height: 21px;
    margin: 0 -10px -2px -7px;
    padding: 0 12px;
    background: #c8c8c8;
    font-weight: bold;
    line-height: 22px;
}

.field {
    display: flex;
    align-items: center;
    height: 20px;
}

.field > label:first-child {
    width: 111px;
    flex: none;
    padding-bottom: 1px;
}

.field > input {
    height: 20px;
    padding: 0 3px;
    border: 1px solid #868686;
    background: #fff;
    color: #000;
}

.field > .full {
    flex: 1;
    min-width: 0;
}

.second {
    flex: 1;
    padding-right: 4px;
    text-align: right;
}

.approved {
    gap: 4px;
    padding-left: 87px;
}

.spin {
    width: 114px;
    height: 20px;
    display: flex;
    align-items: center;
    gap: 8px;
    padding-right: 4px;
    border: 1px solid #868686;
    background: #fff;
}

.spin input {
    flex: 1;
    min-width: 0;
    color: #000;
    text-align: right;
}

.tri-up,
.tri-down {
    display: block;
    border: 4px solid transparent;
    border-top: 0;
    border-bottom: 5px solid #4b4b4b;
}

.tri-down {
    border-top: 5px solid #4b4b4b;
    border-bottom: 0;
}

.unit {
    width: 52px;
    padding-left: 10px;
}

.price {
    margin: 3px 0 0;
    padding: 0 8px 8px 7px;
}

.price legend {
    margin: 0 -9px 1px -8px;
}

.price .field > input {
    width: 94px;
    background: #f0f0f0;
    text-align: right;
}

.price .field > button {
    margin: 0 8px 0 9px;
}

.li {
    display: block;
    width: 14px;
    height: 15px;
}

.price .agreed {
    margin-left: 31px;
}

.price hr {
    width: 100%;
    height: 1px;
    margin: 0 0 -1px;
    border: 0;
    background: #c8c8c8;
}

.dialog-footer {
    flex: none;
    height: 33px;
    display: flex;
    align-items: center;
    justify-content: flex-end;
    gap: 6px;
    padding-right: 6px;
    background: #c8c8c8;
}

.dialog-footer .btn {
    width: 75px;
}
```
